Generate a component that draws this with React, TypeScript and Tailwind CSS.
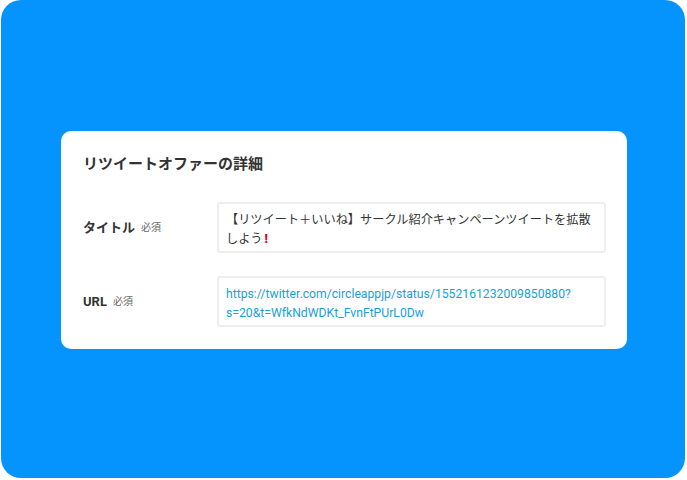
import React from "react";

const fields = [
  {
    label: "タイトル",
    value: (
      <span className="text-[#333]">
        【リツイート＋いいね】サークル紹介キャンペーンツイートを拡散
        <br />
        しよう
        <span className="ml-[2px] inline-block font-black text-[#e60012]">!</span>
      </span>
    ),
  },
  {
    label: "URL",
    value: (
      <span className="text-[#1a9fdb]">
        https://twitter.com/circleappjp/status/1552161232009850880?
        <br />
        s=20&amp;t=WfkNdWDKt_FvnFtPUrL0Dw
      </span>
    ),
  },
];

export default function App() {
  return (
    <div
      className="w-[687px] h-[480px] bg-white"
      style={{ fontFamily: 'Roboto, "Noto Sans CJK JP", sans-serif' }}
    >
      <div className="ml-[1px] w-[684px] h-[478px] rounded-[20px] bg-[#0593fe] flex items-center justify-center pl-[2px] pt-[2px]">
        <div className="w-[566px] rounded-[10px] bg-white pl-[22px] pr-[21px] pt-[22px] pb-[22px]">
          <h2 className="text-[15px] leading-[22px] font-bold text-[#333] mb-[27px]">
            リツイートオファーの詳細
          </h2>
          <div className="flex flex-col gap-[23px]">
            {fields.map((f) => (
              <div key={f.label} className="flex items-center">
                <div className="w-[134px] flex items-center gap-[6px]">
                  <span className="text-[13px] font-bold text-[#333]">{f.label}</span>
                  <span className="text-[10px] text-[#666]">必須</span>
                </div>
                <div className="flex-1 border-2 border-[#eeeeee] rounded-[3px] pl-[7px] pr-[4px] pt-[7px] pb-[2px] text-[12.2px] leading-[19px]">
                  {f.value}
                </div>
              </div>
            ))}
          </div>
        </div>
      </div>
    </div>
  );
}
